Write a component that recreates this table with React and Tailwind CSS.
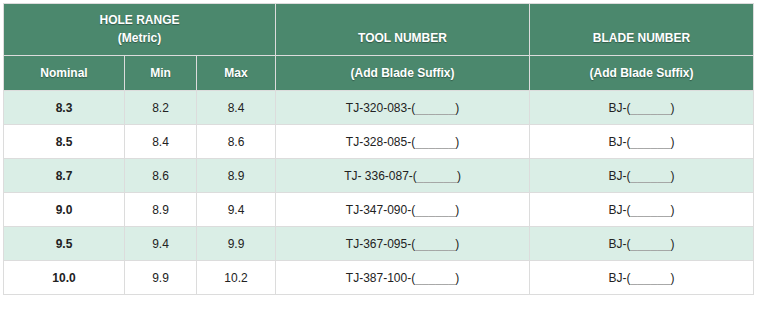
import React from 'react';

const rows = [
  { nominal: '8.3', min: '8.2', max: '8.4', tool: 'TJ-320-083-(' },
  { nominal: '8.5', min: '8.4', max: '8.6', tool: 'TJ-328-085-(' },
  { nominal: '8.7', min: '8.6', max: '8.9', tool: 'TJ- 336-087-(' },
  { nominal: '9.0', min: '8.9', max: '9.4', tool: 'TJ-347-090-(' },
  { nominal: '9.5', min: '9.4', max: '9.9', tool: 'TJ-367-095-(' },
  { nominal: '10.0', min: '9.9', max: '10.2', tool: 'TJ-387-100-(' },
];

const Blank = () => (
  <>
    <span className="text-[#a0a0a0]">______</span>)
  </>
);

const th = 'border border-[#dcdcdc] text-white font-bold text-[12px] [text-shadow:0_1px_1px_rgba(0,0,0,0.35)]';
const td = 'border border-[#dcdcdc] h-[34px] text-center align-middle text-[12px] text-[#222]';

export default function App() {
  return (
    <div className="bg-white p-[3px] font-['Liberation_Sans',Arial,sans-serif]">
      <table className="w-[750px] border-collapse table-fixed">
        <colgroup>
          <col className="w-[121px]" />
          <col className="w-[72px]" />
          <col className="w-[79px]" />
          <col className="w-[254px]" />
          <col className="w-[224px]" />
        </colgroup>
        <thead>
          <tr className="bg-[#4b886d]">
            <th colSpan={3} className={`${th} h-[52px] align-bottom pb-[8px] leading-[18px]`}>
              HOLE RANGE
              <br />
              (Metric)
            </th>
            <th className={`${th} align-bottom pb-[8px] leading-[18px]`}>TOOL NUMBER</th>
            <th className={`${th} align-bottom pb-[8px] leading-[18px]`}>BLADE NUMBER</th>
          </tr>
          <tr className="bg-[#4b886d]">
            <th className={`${th} h-[35px]`}>Nominal</th>
            <th className={th}>Min</th>
            <th className={th}>Max</th>
            <th className={th}>(Add Blade Suffix)</th>
            <th className={th}>(Add Blade Suffix)</th>
          </tr>
        </thead>
        <tbody>
          {rows.map((r, i) => (
            <tr key={r.nominal} className={i % 2 === 0 ? 'bg-[#daeee6]' : 'bg-white'}>
              <td className={`${td} font-bold`}>{r.nominal}</td>
              <td className={td}>{r.min}</td>
              <td className={td}>{r.max}</td>
              <td className={td}>
                {r.tool}
                <Blank />
              </td>
              <td className={td}>
                BJ-(
                <Blank />
              </td>
            </tr>
          ))}
        </tbody>
      </table>
    </div>
  );
}
